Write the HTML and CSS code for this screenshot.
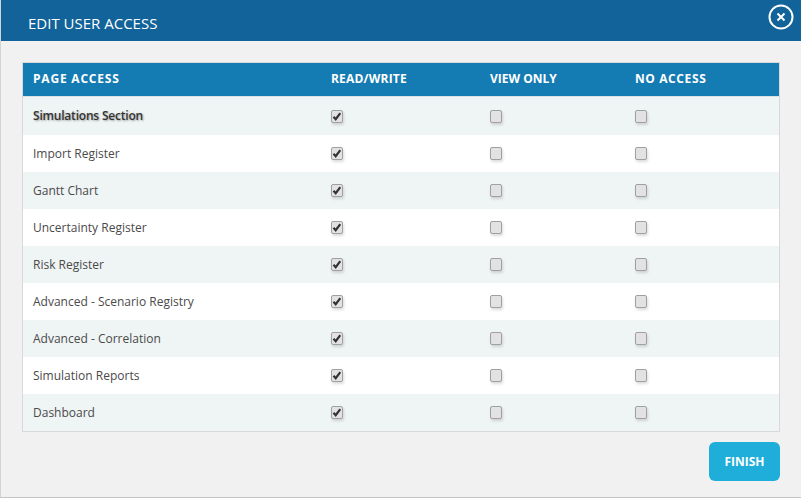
FILE: index.html
```html
<!DOCTYPE html>
<html lang="en">
<head>
    <meta charset="UTF-8">
    <meta name="viewport" content="width=device-width, initial-scale=1.0">
    <title>Edit User Access</title>
    <link rel="stylesheet" href="styles.css">
</head>
<body>
    <div class="modal">
        <header class="modal-header">
            <h1>EDIT USER ACCESS</h1>
            <button class="close-btn" type="button" aria-label="Close">
                <svg width="26" height="26" viewBox="0 0 26 26">
                    <circle cx="13" cy="13" r="11.5" fill="none" stroke="#fff" stroke-width="2"/>
                    <path d="M9.5 9.5l7 7M16.5 9.5l-7 7" fill="none" stroke="#fff" stroke-width="2"/>
                </svg>
            </button>
        </header>

        <section class="modal-body">
            <table class="access-table">
                <thead>
                    <tr>
                        <th class="col-page">PAGE ACCESS</th>
                        <th class="col-rw">READ/WRITE</th>
                        <th class="col-view">VIEW ONLY</th>
                        <th class="col-none">NO ACCESS</th>
                    </tr>
                </thead>
                <tbody>
                    <tr class="section-row">
                        <td>Simulations Section</td>
                        <td><input type="checkbox" checked></td>
                        <td><input type="checkbox"></td>
                        <td><input type="checkbox"></td>
                    </tr>
                    <tr>
                        <td>Import Register</td>
                        <td><input type="checkbox" checked></td>
                        <td><input type="checkbox"></td>
                        <td><input type="checkbox"></td>
                    </tr>
                    <tr>
                        <td>Gantt Chart</td>
                        <td><input type="checkbox" checked></td>
                        <td><input type="checkbox"></td>
                        <td><input type="checkbox"></td>
                    </tr>
                    <tr>
                        <td>Uncertainty Register</td>
                        <td><input type="checkbox" checked></td>
                        <td><input type="checkbox"></td>
                        <td><input type="checkbox"></td>
                    </tr>
                    <tr>
                        <td>Risk Register</td>
                        <td><input type="checkbox" checked></td>
                        <td><input type="checkbox"></td>
                        <td><input type="checkbox"></td>
                    </tr>
                    <tr>
                        <td>Advanced - Scenario Registry</td>
                        <td><input type="checkbox" checked></td>
                        <td><input type="checkbox"></td>
                        <td><input type="checkbox"></td>
                    </tr>
                    <tr>
                        <td>Advanced - Correlation</td>
                        <td><input type="checkbox" checked></td>
                        <td><input type="checkbox"></td>
                        <td><input type="checkbox"></td>
                    </tr>
                    <tr>
                        <td>Simulation Reports</td>
                        <td><input type="checkbox" checked></td>
                        <td><input type="checkbox"></td>
                        <td><input type="checkbox"></td>
                    </tr>
                    <tr>
                        <td>Dashboard</td>
                        <td><input type="checkbox" checked></td>
                        <td><input type="checkbox"></td>
                        <td><input type="checkbox"></td>
                    </tr>
                </tbody>
            </table>

            <div class="modal-actions">
                <button class="finish-btn" type="button">FINISH</button>
            </div>
        </section>
    </div>
</body>
</html>
```

FILE: styles.css
```css
html, body {
    height: 100%;
}

body {
    margin: 0;
    padding: 0;
    background-color: #f1f1f1;
    font-family: "Open Sans", Arial, sans-serif;
    overflow: hidden;
}

.modal {
    box-sizing: border-box;
    height: 498px;
    border-left: 1px solid #d4d4d4;
    border-bottom: 1px solid #c4c4c4;
    background-color: #f1f1f1;
}

.modal-header {
    display: flex;
    justify-content: space-between;
    align-items: flex-start;
    height: 41px;
    background-color: #116399;
    color: #fff;
}

.modal-header h1 {
    margin: 0;
    padding-left: 27px;
    font-size: 15px;
    font-weight: 400;
    line-height: 47px;
}

.close-btn {
    display: block;
    margin: 4px 7px 0 0;
    padding: 0;
    width: 26px;
    height: 26px;
    background: none;
    border: none;
    cursor: pointer;
}

.modal-body {
    padding: 21px 21px 0;
}

.access-table {
    box-sizing: border-box;
    width: 758px;
    border-collapse: separate;
    border-spacing: 0;
    border: 1px solid #d9d9d9;
    background-color: #fff;
}

.access-table th {
    height: 31px;
    padding: 0 10px 2px;
    border-bottom: 1px solid #d9e2e5;
    background-color: #157cb3;
    color: #fff;
    font-size: 12px;
    font-weight: 700;
    text-align: left;
}

.access-table .col-page {
    width: 278px;
    letter-spacing: 0.8px;
}

.access-table .col-rw {
    width: 139px;
    letter-spacing: 0.2px;
}

.access-table .col-view {
    width: 125px;
}

.access-table .col-none {
    letter-spacing: 0.6px;
}

.access-table td {
    height: 37px;
    padding: 0 10px;
    color: #4a4a4a;
    font-size: 12px;
}

.access-table tbody tr:nth-child(odd) {
    background-color: #eff4f4;
}

.section-row td {
    height: 38px;
}

.section-row td:first-child {
    box-sizing: border-box;
    padding-bottom: 2px;
    color: #333;
    font-weight: 600;
    letter-spacing: -0.2px;
    text-shadow: 1px 1px 2px rgba(0, 0, 0, 0.35);
}

.access-table input[type="checkbox"] {
    appearance: none;
    -webkit-appearance: none;
    display: block;
    box-sizing: border-box;
    width: 12px;
    height: 13px;
    margin: 0;
    border: 1px solid #a0a0a0;
    border-radius: 2px;
    background-color: #e2e2e2;
    box-shadow: 1px 2px 3px rgba(0, 0, 0, 0.14);
}

.access-table input[type="checkbox"]:checked {
    background-image: url("data:image/svg+xml,%3Csvg xmlns='http://www.w3.org/2000/svg' width='10' height='11'%3E%3Cpath d='M1.5 5.8l2.2 2.4 4.6-6' fill='none' stroke='%23333' stroke-width='2.2'/%3E%3C/svg%3E");
    background-position: center;
    background-repeat: no-repeat;
}

.modal-actions {
    display: flex;
    justify-content: flex-end;
    padding-top: 10px;
}

.finish-btn {
    width: 71px;
    height: 39px;
    padding: 0;
    border: none;
    border-radius: 6px;
    background-color: #1eaed9;
    color: #fff;
    font-family: "Open Sans", Arial, sans-serif;
    font-size: 12px;
    font-weight: 700;
    cursor: pointer;
}
```
